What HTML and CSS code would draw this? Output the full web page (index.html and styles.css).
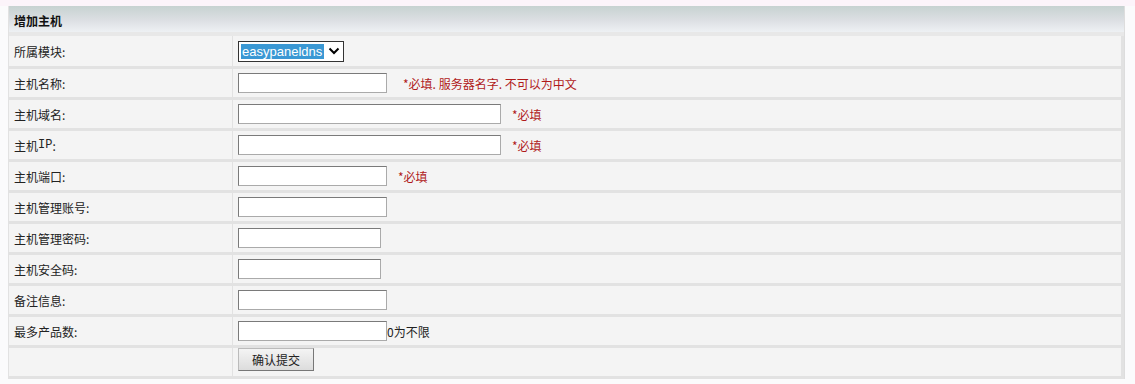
FILE: index.html
```html
<!DOCTYPE html>
<html>
<head>
<meta charset="utf-8">
<link rel="stylesheet" href="styles.css">
</head>
<body>
<div class="topband"></div>
<div class="panel">
  <div class="head">增加主机</div>
  <div class="grid">
    <div class="lab first">所属模块:</div>
    <div class="val first"><span class="sel"><span class="opt">easypaneldns</span><svg class="chev" width="12" height="10" viewBox="0 0 12 10"><path d="M1.5 2.5 L6 7 L10.5 2.5" fill="none" stroke="#000" stroke-width="2"/></svg></span></div>

    <div class="lab">主机名称:</div>
    <div class="val"><span class="inp w150"></span><span class="req gap16">*必填. 服务器名字. 不可以为中文</span></div>

    <div class="lab">主机域名:</div>
    <div class="val"><span class="inp w264"></span><span class="req gap10">*必填</span></div>

    <div class="lab">主机<span class="mono">IP</span>:</div>
    <div class="val"><span class="inp w264"></span><span class="req gap10">*必填</span></div>

    <div class="lab">主机端口:</div>
    <div class="val"><span class="inp w150"></span><span class="req gap10">*必填</span></div>

    <div class="lab">主机管理账号:</div>
    <div class="val"><span class="inp w150"></span></div>

    <div class="lab">主机管理密码:</div>
    <div class="val"><span class="inp w144"></span></div>

    <div class="lab">主机安全码:</div>
    <div class="val"><span class="inp w144"></span></div>

    <div class="lab">备注信息:</div>
    <div class="val"><span class="inp w150"></span></div>

    <div class="lab">最多产品数:</div>
    <div class="val"><span class="inp w150"></span><span class="note">0为不限</span></div>

    <div class="lab"></div>
    <div class="val btnrow"><span class="btn">确认提交</span></div>
  </div>
</div>
</body>
</html>
```
FILE: styles.css
```css
html, body {
  margin: 0;
  padding: 0;
  background: #fbfbfc;
  font-family: "SimSun", "Noto Sans CJK SC", "Liberation Sans", sans-serif;
  font-size: 12px;
  color: #222;
}
.topband {
  height: 6px;
  background: #fcf4fa;
}
.panel {
  margin-left: 8px;
  width: 1115px;
  border-right: 1px solid #ddd;
  border-left: 1px solid #e2e2e2;
  background: #e4e4e4;
}
.head {
  height: 26px;
  line-height: 30px;
  padding-left: 5px;
  font-weight: bold;
  font-size: 12px;
  color: #111;
  background: linear-gradient(#c7d2d1, #dcdfe3 55%, #eef1f4);
  border-bottom: 4px solid #e8e8e8;
}
.grid {
  display: grid;
  grid-template-columns: 223px 1fr;
  column-gap: 1px;
  row-gap: 3px;
  background: #e2e2e2;
  padding: 0 3px 3px 0;
}
.lab, .val {
  background: #f4f4f4;
  height: 28px;
  display: flex;
  align-items: center;
}
.lab.first, .val.first {
  height: 30px;
}
.lab {
  padding-left: 5px;
  color: #222;
}
.mono {
  font-family: "Liberation Mono", monospace;
  font-size: 12px;
}
.val {
  padding-left: 5px;
}
.sel {
  display: inline-flex;
  align-items: center;
  height: 19px;
  width: 104px;
  border: 1px solid #333;
  background: #fff;
}
.opt {
  background: #3a98d4;
  color: #fff;
  font-family: "Liberation Sans", Arial, sans-serif;
  font-size: 13px;
  height: 15px;
  line-height: 15px;
  margin-left: 2px;
  padding: 0 2px 0 1px;
}
.chev {
  margin-left: 4px;
}
.inp {
  display: inline-block;
  height: 18px;
  background: #fff;
  border: 1px solid #7a7a7a;
  border-right-color: #aaa;
  border-bottom-color: #aaa;
  box-sizing: content-box;
}
.w150 { width: 147px; }
.w264 { width: 261px; }
.w144 { width: 141px; }
.req {
  color: #b01a1a;
}
.gap16 { margin-left: 16px; }
.gap10 { margin-left: 11px; }
.note {
  color: #222;
}
.btnrow {
  align-items: flex-start;
}
.btn {
  display: inline-block;
  width: 74px;
  height: 21px;
  line-height: 21px;
  text-align: center;
  border: 1px solid #777;
  border-top-color: #bbb;
  border-left-color: #bbb;
  background: linear-gradient(#f4f4f4, #dcdcdc);
  color: #222;
}
```
